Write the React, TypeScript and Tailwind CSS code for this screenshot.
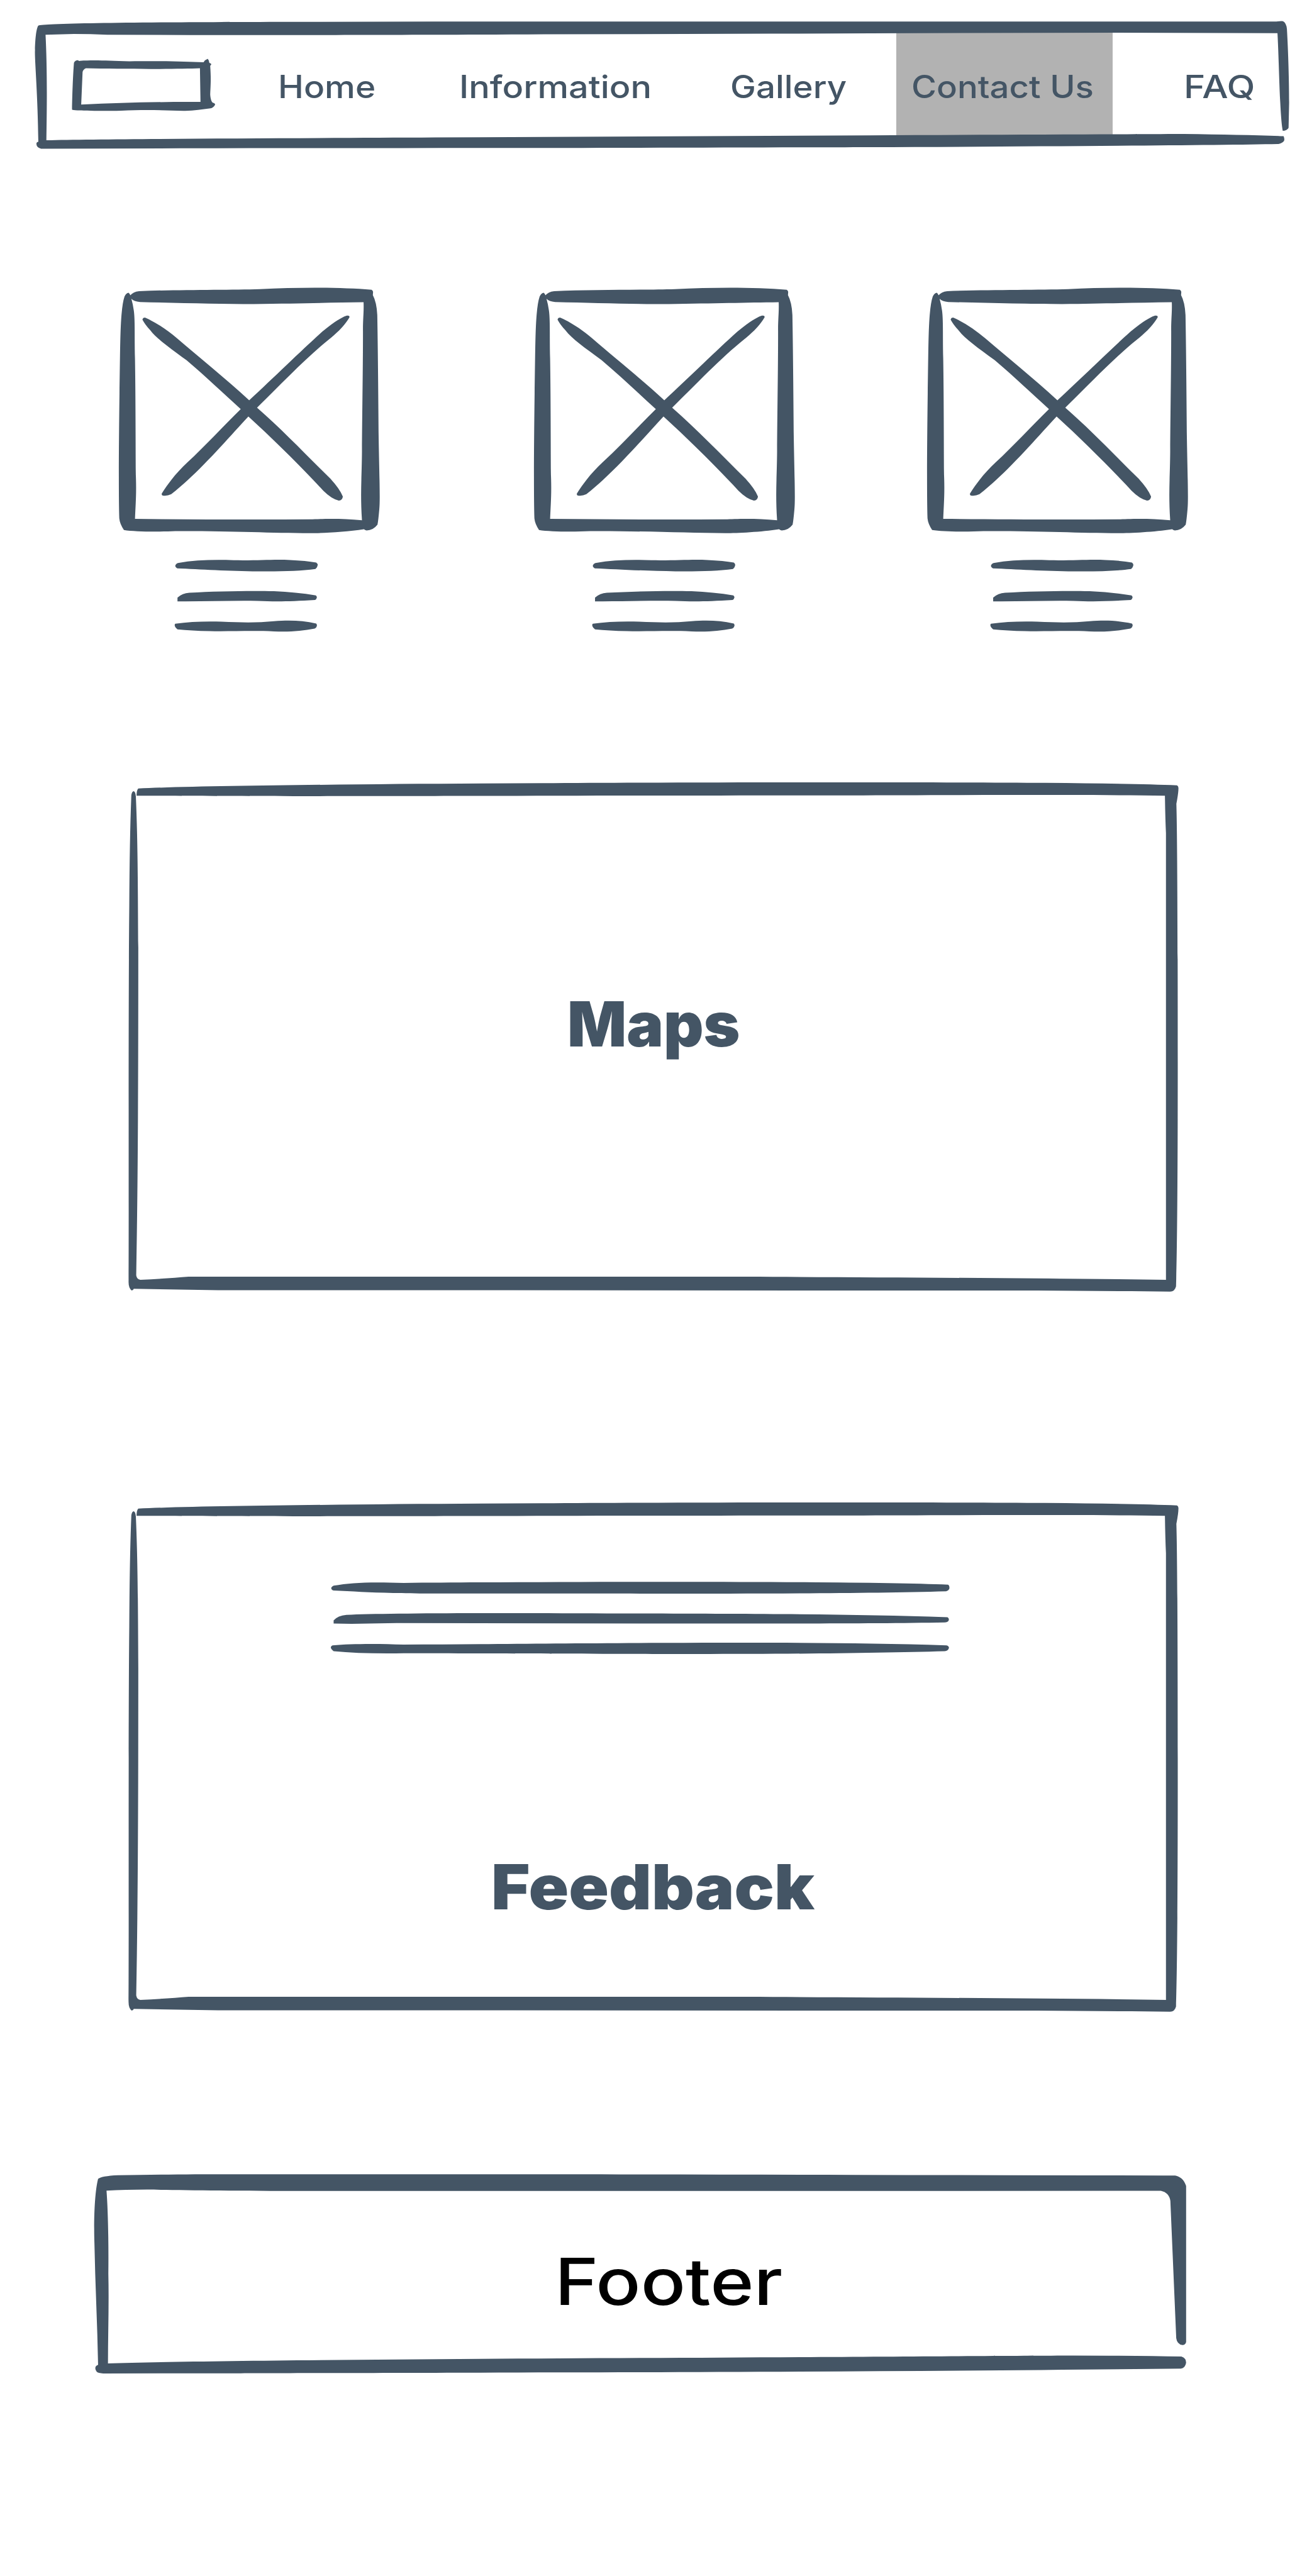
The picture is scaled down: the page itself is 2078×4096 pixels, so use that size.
import React from "react";

const INK = "fill-[#445565]";

function Sketch({ viewBox, className, children }: { viewBox: string; className: string; children: React.ReactNode }) {
  return (
    <svg viewBox={viewBox} preserveAspectRatio="none" aria-hidden="true" className={`${INK} ${className}`}>
      {children}
    </svg>
  );
}

const NAV_FRAME =
  "M52 68 Q60 63 110 61 C250 54 500 50 1000 49 L1481 48 L4514 48 Q4530 44 4538 46 Q4550 55 4552 84 C4557 200 4560 350 4560 450 L4558 575 Q4552 590 4537 590 Q4532 560 4528 450 C4524 350 4522 200 4518 105 L3939 103 L3049 106 L2694 108 L1874 111 C1500 114 1200 114 1000 115 L600 115 L300 113 Q240 109 180 109 L78 113 C83 250 84 400 81 637 C300 630 1000 627 1481 623 L3049 613 C3500 609 3900 608 4179 606 Q4400 610 4540 617 Q4545 633 4541 642 Q4532 655 4518 656 C4300 662 3600 669 3049 671 C2500 674 1481 676 565 677 L62 679 Q46 674 45 655 Q46 645 52 645 C50 400 38 230 40 190 C41 130 45 80 52 68Z";

const LOGO =
  "M180 252 Q184 240 194 240 Q198 245 201 243 C260 238 300 243 380 245 C500 243 580 246 647 250 Q652 238 662 233 Q667 240 668 253 Q675 255 675 260 L671 268 C674 330 673 350 671 410 C672 430 675 452 685 453 Q690 458 688 462 Q682 476 672 479 C640 484 610 492 575 491 C500 488 440 484 350 490 C280 493 210 490 192 489 Q176 488 173 485 C174 400 177 300 180 252Z M223 280 C350 284 550 285 634 280 L636 447 C450 446 350 452 206 460 L211 298 Q213 286 223 280Z";

const BOX =
  "M78 80 Q86 65 98 64 Q103 66 107 75 Q120 60 150 57 C350 50 600 52 750 48 C950 40 1150 40 1305 51 Q1313 56 1312 62 L1311 74 Q1330 105 1333 160 C1336 300 1338 500 1340 700 C1343 850 1348 960 1343 1000 Q1338 1050 1334 1067 Q1312 1092 1280 1092 Q1272 1091 1267 1087 C1180 1099 1060 1104 1000 1104 C800 1103 600 1094 330 1095 C250 1098 130 1098 75 1090 Q55 1065 52 1040 C48 930 50 700 53 500 C56 350 56 230 63 160 Q68 105 78 80Z M112 90 Q124 102 155 104 C350 108 550 113 720 113 C950 110 1100 107 1265 105 C1267 150 1261 180 1262 230 C1262 400 1258 600 1257 750 C1256 870 1248 930 1257 1048 C1150 1038 1050 1042 1000 1044 C700 1046 400 1044 130 1042 C133 980 138 930 134 850 C133 700 133 500 130 350 C127 270 131 180 124 140 Q120 115 112 90Z";

const CROSS =
  "M167 180 Q170 170 182 172 C240 195 290 225 340 262 C450 345 580 435 697 529 C820 430 960 310 1060 232 C1110 196 1150 172 1180 163 Q1196 161 1195 170 C1170 208 1130 240 1090 268 C980 345 860 455 736 561 C860 655 980 765 1100 868 Q1145 910 1162 945 Q1160 962 1142 963 Q1105 955 1065 920 C950 812 820 700 693 599 C590 695 450 840 310 935 Q290 944 268 941 Q261 940 263 932 C300 880 345 835 390 798 C480 725 570 640 655 567 C570 500 480 425 385 355 C300 300 240 265 205 225 Q180 202 167 180Z";

const CAPTION_LINES = [
  "M343 1233 C430 1220 520 1218 620 1221 C740 1223 820 1216 900 1220 Q980 1223 1030 1231 Q1038 1236 1037 1243 Q1036 1252 1026 1259 C950 1268 850 1270 740 1269 C600 1268 450 1260 340 1256 Q330 1252 330 1245 Q332 1236 343 1233Z",
  "M341 1383 Q365 1364 400 1362 C530 1355 700 1353 820 1355 Q930 1359 1028 1373 Q1034 1378 1033 1383 Q1030 1392 1024 1393 C900 1400 820 1400 740 1397 C600 1395 480 1400 341 1399Z",
  "M330 1496 C400 1487 480 1485 560 1487 C660 1491 740 1492 820 1485 C900 1480 960 1482 1030 1495 Q1035 1500 1033 1506 Q1030 1515 1022 1517 C960 1527 900 1532 820 1529 C700 1525 600 1530 500 1528 Q410 1526 341 1520 Q328 1512 327 1502 Q327 1498 330 1496Z",
];

const PANEL =
  "M80 82 Q80 66 85 61 C300 52 800 48 1250 46 C1700 43 2400 43 2700 45 Q2950 47 3080 52 Q3084 54 3084 60 Q3084 75 3078 105 C3081 200 3082 500 3082 850 C3082 1200 3080 1400 3077 1497 Q3073 1512 3060 1512 C2800 1509 2500 1509 2300 1509 L1155 1508 L315 1508 L72 1504 Q70 1509 66 1509 Q57 1502 57 1485 C58 1300 56 700 59 400 Q60 200 65 80 Q67 69 72 69 Q77 71 78 85 C83 200 84 300 85 520 C85 900 84 1200 79 1465 Q81 1477 91 1478 Q170 1474 230 1469 L1568 1469 L1838 1469 C2200 1471 2700 1473 3048 1478 L3048 540 L3048 190 Q3046 150 3045 82 C2800 79 2400 80 2140 81 C1600 81 1000 83 700 83 C400 84 200 82 80 82Z";

const FEEDBACK_LINES = [
  "M648 286 C700 277 750 275 850 278 C1200 275 1700 274 2006 276 Q2280 278 2420 283 Q2425 286 2423 296 Q2420 301 2414 302 C2200 308 1900 309 1568 309 C1200 308 950 310 820 307 C750 306 700 302 648 300 Q641 298 641 292 Q643 288 648 286Z",
  "M648 386 Q660 372 685 370 C800 365 1100 364 1480 366 C1900 367 2150 368 2418 377 Q2424 381 2421 387 Q2418 392 2410 392 C2200 396 1900 395 1568 395 L830 394 L700 396 L648 395Z",
  "M645 458 C700 453 780 453 850 456 C1100 455 1300 452 1600 451 C1900 450 2150 450 2415 458 Q2423 460 2422 466 Q2420 474 2410 475 C2200 481 1900 484 1568 483 C1200 482 1000 481 850 481 Q730 483 648 475 Q639 468 640 463 Q641 459 645 458Z",
];

const FOOTER_FRAME =
  "M36 80 Q45 66 90 62 C250 56 350 57 500 57 C1100 57 1600 57 2100 60 Q2700 62 2978 63 Q3000 70 3008 115 L3008 890 Q3006 905 2998 905 Q2983 900 2981 870 L2965 190 Q2962 148 2939 139 L1792 140 L600 140 C400 139 250 136 170 133 Q110 134 59 138 C63 230 65 400 64 550 C66 700 63 850 63 996 C300 982 900 975 1518 969 C2000 965 2500 958 2700 957 Q2880 957 2995 962 Q3008 970 3008 992 Q3006 1018 2994 1022 C2600 1030 2000 1038 1518 1040 C1000 1042 500 1044 400 1045 L50 1046 Q36 1045 32 1037 Q26 1022 30 1010 Q32 1005 36 1003 C34 800 28 600 26 400 C24 300 26 150 36 80Z";

function Card({ className, lineShift }: { className: string; lineShift: number }) {
  return (
    <article className={`flex w-[461.1px] shrink-0 flex-col ${className}`}>
      <Sketch viewBox="0 0 1440 1140" className="block h-[419.1px] w-full">
        <path fillRule="evenodd" d={BOX} />
        <path d={CROSS} />
      </Sketch>
      <Sketch viewBox="0 1140 1440 428" className="block h-[157.3px] w-full">
        <g transform={`translate(${lineShift} 0)`}>
          {CAPTION_LINES.map((d) => (
            <path key={d} d={d} />
          ))}
        </g>
      </Sketch>
    </article>
  );
}

function PanelFrame() {
  return (
    <Sketch viewBox="0 0 3136 1568" className="absolute inset-0 h-full w-full">
      <path d={PANEL} />
    </Sketch>
  );
}

const NAV = [
  { label: "Home", box: "ml-[97px] w-[152px]", stretch: "scale-x-[1.095]" },
  { label: "Information", box: "ml-[136px] w-[303px]", stretch: "scale-x-[1.112]" },
  { label: "Gallery", box: "ml-[128.5px] w-[187px]", stretch: "scale-x-[1.09]" },
  { label: "Contact Us", box: "ml-[76.4px] w-[344px] bg-[#b2b2b2] pl-[24.6px]", stretch: "scale-x-[1.087]" },
  { label: "FAQ", box: "ml-[112.7px] w-[112px]", stretch: "scale-x-[1.165]" },
];

export default function App() {
  return (
    <div className="flex h-[4096px] w-[2078px] flex-col overflow-hidden bg-white pt-[19.2px] font-['Inter',sans-serif] text-[#445565]">
      <header className="relative ml-[38.4px] flex h-[230.6px] w-[2036.7px] shrink-0 items-start">
        <Sketch viewBox="165 225 530 275" className="mt-[72.1px] ml-[72.8px] block h-[88.1px] w-[233.8px] shrink-0">
          <path fillRule="evenodd" d={LOGO} />
        </Sketch>
        <nav className="mt-[33px] flex h-[163px] shrink-0 text-[50.2px] leading-[60px] font-medium">
          {NAV.map((item) => (
            <a key={item.label} className={`flex shrink-0 items-center pt-[9px] whitespace-nowrap ${item.box}`}>
              <span className={`inline-block origin-left ${item.stretch}`}>{item.label}</span>
            </a>
          ))}
        </nav>
        <Sketch viewBox="0 0 4616.9 720" className="absolute inset-0 h-full w-full">
          <path d={NAV_FRAME} />
        </Sketch>
      </header>

      <section className="mt-[192.1px] flex h-[576.4px] shrink-0 pl-[172.9px]">
        <Card className="" lineShift={0} />
        <Card className="ml-[199.5px]" lineShift={12} />
        <Card className="ml-[163.4px]" lineShift={37} />
      </section>

      <section className="relative mt-[201.8px] ml-[172.9px] h-[864.6px] w-[1729.3px] shrink-0">
        <PanelFrame />
        <h2 className="pt-[347.6px] pl-[729px] text-[98.6px] leading-[120px] font-black whitespace-nowrap">Maps</h2>
      </section>

      <section className="relative mt-[280.2px] ml-[172.9px] h-[864.6px] w-[1729.3px] shrink-0">
        <PanelFrame />
        <Sketch viewBox="620 260 1840 240" className="mt-[141.8px] ml-[341.9px] block h-[132.3px] w-[1014.6px]">
          {FEEDBACK_LINES.map((d) => (
            <path key={d} d={d} />
          ))}
        </Sketch>
        <h2 className="mt-[301.5px] ml-[608.5px] w-fit origin-left scale-x-[1.067] text-[98.6px] leading-[120px] font-black whitespace-nowrap">
          Feedback
        </h2>
      </section>

      <footer className="relative mt-[209.8px] ml-[134.5px] h-[355.5px] w-[1796.5px] shrink-0">
        <Sketch viewBox="0 0 3086.5 1110" className="absolute inset-0 h-full w-full">
          <path d={FOOTER_FRAME} />
        </Sketch>
        <p className="ml-[747px] w-fit origin-left scale-x-[1.147] pt-[129.2px] text-[103px] leading-[120px] font-medium whitespace-nowrap text-black">
          Footer
        </p>
      </footer>
    </div>
  );
}
